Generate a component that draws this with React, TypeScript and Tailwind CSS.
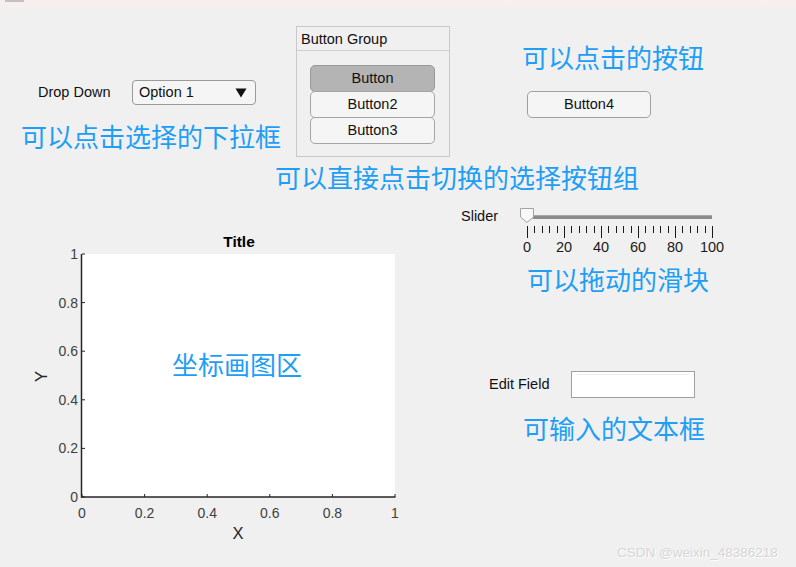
import React from 'react';

const cn = "font-['Noto_Sans_CJK_SC','Noto_Sans',sans-serif] text-[26px] leading-[26px] text-[#1e9ef5] whitespace-nowrap";

function Axes() {
  const yTicks = [1, 0.8, 0.6, 0.4, 0.2, 0];
  const xTicks = [0, 0.2, 0.4, 0.6, 0.8, 1];
  const top = 26;
  const bottom = 269;
  const left = 52;
  const right = 365;
  return (
    <div className="relative ml-[30px] mt-[38px] h-[320px] w-[380px] shrink-0">
      <svg width="380" height="320" className="block font-['Liberation_Sans',Arial,sans-serif]">
        <rect x={left} y={top} width={right - left} height={bottom - top} fill="#ffffff" />
        <line x1={left - 0.5} y1={top} x2={left - 0.5} y2={bottom + 0.5} stroke="#262626" strokeWidth="1.5" />
        <line x1={left - 1} y1={bottom} x2={right + 0.5} y2={bottom} stroke="#262626" strokeWidth="1.5" />
        {yTicks.map((v) => {
          const y = bottom - v * (bottom - top);
          return (
            <g key={'y' + v}>
              <line x1={left} y1={y} x2={left + 3} y2={y} stroke="#262626" strokeWidth="1" />
              <text x={48} y={y} textAnchor="end" dominantBaseline="central" fontSize="14" fill="#404040">
                {v}
              </text>
            </g>
          );
        })}
        {xTicks.map((v) => {
          const x = left + v * (right - left);
          return (
            <g key={'x' + v}>
              <line x1={x} y1={bottom} x2={x} y2={bottom - 3} stroke="#262626" strokeWidth="1" />
              <text x={x} y={284.5} textAnchor="middle" dominantBaseline="central" fontSize="14" fill="#404040">
                {v}
              </text>
            </g>
          );
        })}
        <text x={209} y={13.5} textAnchor="middle" dominantBaseline="central" fontSize="15.5" fontWeight="bold" fill="#000">
          Title
        </text>
        <text x={208} y={305} textAnchor="middle" dominantBaseline="central" fontSize="16.5" fill="#262626">
          X
        </text>
        <text
          x={11}
          y={148.5}
          textAnchor="middle"
          dominantBaseline="central"
          fontSize="16.5"
          fill="#262626"
          transform="rotate(-90 11 148.5)"
        >
          Y
        </text>
      </svg>
      <div className={`${cn} absolute left-[142px] top-[123px]`}>坐标画图区</div>
    </div>
  );
}

function Slider() {
  const ticks = Array.from({ length: 26 }, (_, i) => i);
  const labels = [0, 20, 40, 60, 80, 100];
  return (
    <div className="relative h-[50px] w-[215px]">
      <svg width="215" height="50" className="block">
        <rect x="18" y="8" width="179" height="4" fill="#8c8c8c" />
        <line x1="18" y1="8.5" x2="197" y2="8.5" stroke="#a8a8a8" strokeWidth="1" />
        <path d="M5.5 1.5 H18.5 V10 L12 15.5 L5.5 10 Z" fill="#f8f8f8" stroke="#a3a3a3" strokeWidth="1" />
        {ticks.map((i) => {
          const x = Math.round(12 + i * 7.4) + 0.5;
          const major = i % 5 === 0;
          return <line key={i} x1={x} y1={19} x2={x} y2={major ? 31 : 26} stroke="#1a1a1a" strokeWidth="1" />;
        })}
      </svg>
      {labels.map((v, k) => (
        <span
          key={v}
          className="absolute top-[32px] -translate-x-1/2 text-[14.5px] leading-[17px] text-[#1a1a1a]"
          style={{ left: 12 + k * 37 }}
        >
          {v}
        </span>
      ))}
    </div>
  );
}

function GroupButton({ label, selected }: { label: string; selected?: boolean }) {
  return (
    <div
      className={
        'flex h-[27px] w-[125px] items-center justify-center rounded-[5px] border text-[14.5px] ' +
        (selected ? 'border-[#999999] bg-[#b4b4b4]' : '-mt-px border-[#a5a5a5] bg-[#f5f5f5]')
      }
    >
      {label}
    </div>
  );
}

export default function App() {
  return (
    <div className="relative h-[567px] w-[796px] overflow-hidden bg-[#f0f0f0] font-['Liberation_Sans',Arial,sans-serif] text-[#111111]">
      <div className="relative h-[10px] bg-gradient-to-b from-[#f9efee] to-[#f3efef]">
        <div className="absolute left-[5px] top-0 h-[2px] w-[19px] bg-[#c4c0c0]" />
      </div>

      {/* row 1 */}
      <div className="mt-[16px] flex items-start">
        <div className="ml-[19px] flex w-[277px] shrink-0 flex-col">
          <div className="ml-[19px] mt-[54px] flex items-center">
            <span className="w-[94px] text-[14.5px] leading-[17px]">Drop Down</span>
            <div className="flex h-[25px] w-[124px] items-center justify-between rounded-[4px] border border-[#9a9a9a] bg-[#f5f5f5] pl-[6px] pr-[8px]">
              <span className="text-[14.5px] leading-[17px]">Option 1</span>
              <svg width="12" height="10" viewBox="0 0 12 10">
                <path d="M0.5 0.5 H11.5 L6 9.5 Z" fill="#111" />
              </svg>
            </div>
          </div>
          <div className={`${cn} ml-[2px] mt-[18px]`}>可以点击选择的下拉框</div>
        </div>

        <div className="flex h-[131px] w-[154px] shrink-0 flex-col border border-[#c9c9c9]">
          <div className="flex h-[24px] items-center border-b border-[#cfcfcf] pl-[4px] pt-[2px] text-[14.5px]">Button Group</div>
          <div className="ml-[13px] mt-[14px] flex flex-col">
            <GroupButton label="Button" selected />
            <GroupButton label="Button2" />
            <GroupButton label="Button3" />
          </div>
        </div>

        <div className="ml-[72px] mt-[18px] flex flex-col">
          <div className={cn}>可以点击的按钮</div>
          <div className="ml-[5px] mt-[21px] flex h-[27px] w-[124px] items-center justify-center rounded-[5px] border border-[#a0a0a0] bg-[#f5f5f5] text-[14.5px]">
            Button4
          </div>
        </div>
      </div>

      {/* row 2 */}
      <div className={`${cn} ml-[275px] mt-[7px]`}>可以直接点击切换的选择按钮组</div>

      {/* row 3 */}
      <div className="flex items-start">
        <Axes />
        <div className="mt-[17px] flex flex-col">
          <div className="ml-[51px] flex items-start">
            <span className="mt-px w-[54px] text-[14.5px] leading-[17px]">Slider</span>
            <Slider />
          </div>
          <div className={`${cn} ml-[117px] mt-[9px]`}>可以拖动的滑块</div>
          <div className="ml-[79px] mt-[79px] flex items-center">
            <span className="w-[82px] text-[14.5px] leading-[17px]">Edit Field</span>
            <div className="h-[27px] w-[124px] border border-[#9f9f9f] bg-white px-[5px] pt-[2px]">
              <div className="h-px bg-[#ececec]" />
            </div>
          </div>
          <div className={`${cn} ml-[113px] mt-[17px]`}>可输入的文本框</div>
        </div>
      </div>

      <div className="absolute left-[617px] top-[545px] text-[13.5px] leading-[16px] text-[#d6d6d6] [text-shadow:1px_1px_0_#ffffff]">
        CSDN @weixin_48386218
      </div>
    </div>
  );
}
